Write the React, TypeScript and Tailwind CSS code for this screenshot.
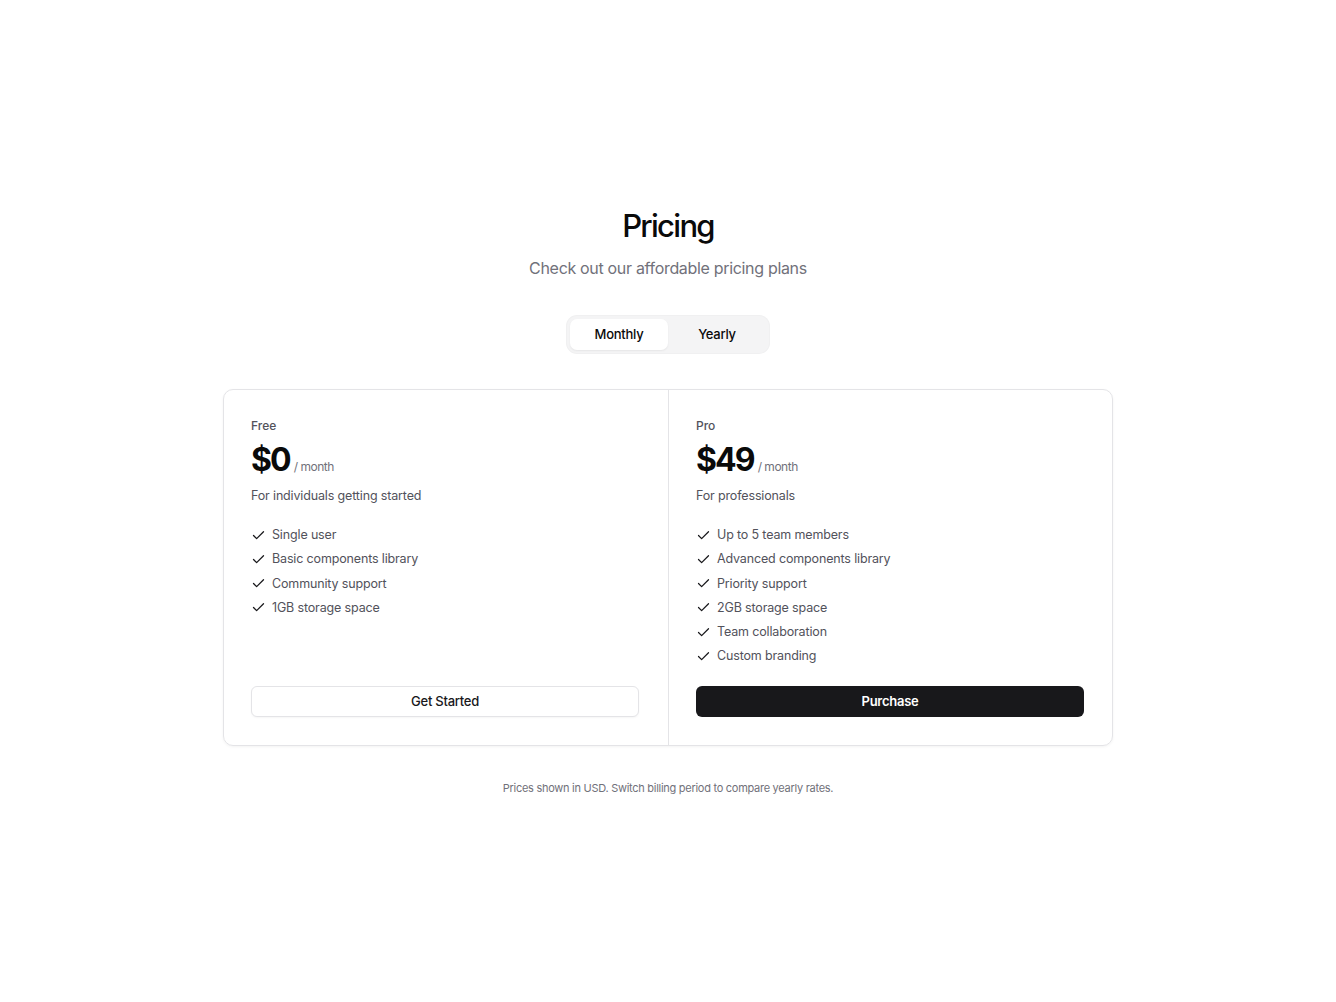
import React, { useState } from "react";
import { Check } from "lucide-react";

const plans = [
  {
    name: "Free",
    price: "$0",
    desc: "For individuals getting started",
    features: ["Single user", "Basic components library", "Community support", "1GB storage space"],
    cta: "Get Started",
    primary: false,
  },
  {
    name: "Pro",
    price: "$49",
    desc: "For professionals",
    features: [
      "Up to 5 team members",
      "Advanced components library",
      "Priority support",
      "2GB storage space",
      "Team collaboration",
      "Custom branding",
    ],
    cta: "Purchase",
    primary: true,
  },
];

export default function App() {
  const [period, setPeriod] = useState<"monthly" | "yearly">("monthly");
  return (
    <div
      className="min-h-screen w-full bg-white text-[#0a0a0a] antialiased"
      style={{ fontFamily: "Inter, 'Noto Sans', sans-serif" }}
    >
      <div className="flex flex-col items-center pt-[206px]">
        <h1 className="text-[31px] leading-[40px] font-medium tracking-[-0.055em]">Pricing</h1>
        <p className="mt-[10px] text-[16px] leading-[24px] text-[#71717a] tracking-[-0.02em]">
          Check out our affordable pricing plans
        </p>

        <div className="mt-[36px] flex rounded-[10px] bg-[#f4f4f5] p-[3px] shadow-[0_0_0_1px_#f0f0f1]">
          <button
            onClick={() => setPeriod("monthly")}
            className={`h-[31px] w-[98px] rounded-[7px] text-[13px] font-medium tracking-[-0.02em] ${
              period === "monthly" ? "bg-white shadow-[0_1px_2px_rgba(0,0,0,0.06)]" : ""
            }`}
          >
            Monthly
          </button>
          <button
            onClick={() => setPeriod("yearly")}
            className={`h-[31px] w-[98px] rounded-[7px] text-[13px] font-medium tracking-[-0.02em] ${
              period === "yearly" ? "bg-white shadow-[0_1px_2px_rgba(0,0,0,0.06)]" : ""
            }`}
          >
            Yearly
          </button>
        </div>

        <div className="mt-[36px] grid w-[890px] grid-cols-2 rounded-[10px] border border-[#e4e4e7] shadow-[0_1px_3px_rgba(0,0,0,0.05)]">
          {plans.map((p, i) => (
            <div
              key={p.name}
              className={`flex flex-col pl-[27px] pt-[28px] pb-[28px] ${
                i === 1 ? "border-l border-[#e4e4e7] pr-[28px]" : "pr-[29px]"
              }`}
            >
              <div className="text-[12px] leading-[16px] font-medium text-[#52525b]">{p.name}</div>
              <div className="mt-[6px] flex items-baseline">
                <span className="text-[32px] leading-[40px] font-bold tracking-[-0.06em]">{p.price}</span>
                <span className="ml-[4px] text-[12px] text-[#71717a] tracking-[-0.04em]">/ month</span>
              </div>
              <p className="mt-[6px] text-[12.5px] leading-[20px] text-[#52525b] tracking-[-0.012em]">{p.desc}</p>
              <ul className="mt-[19px] flex flex-col gap-[4.3px]">
                {p.features.map((f) => (
                  <li
                    key={f}
                    className="flex items-center gap-[6px] text-[12.5px] leading-[20px] text-[#52525b] tracking-[-0.012em]"
                  >
                    <Check size={15} strokeWidth={2} className="text-[#18181b]" />
                    <span>{f}</span>
                  </li>
                ))}
              </ul>
              <div className="mt-auto pt-[20px]">
                <button
                  className={`h-[31px] w-full rounded-[6px] text-[13px] tracking-[-0.02em] ${
                    p.primary
                      ? "bg-[#18181b] text-white font-semibold"
                      : "border border-[#e4e4e7] bg-white text-[#18181b] font-medium shadow-[0_1px_2px_rgba(0,0,0,0.04)]"
                  }`}
                >
                  {p.cta}
                </button>
              </div>
            </div>
          ))}
        </div>

        <p className="mt-[34px] text-[11px] leading-[16px] text-[#71717a] tracking-[-0.025em]">
          Prices shown in USD. Switch billing period to compare yearly rates.
        </p>
      </div>
    </div>
  );
}
